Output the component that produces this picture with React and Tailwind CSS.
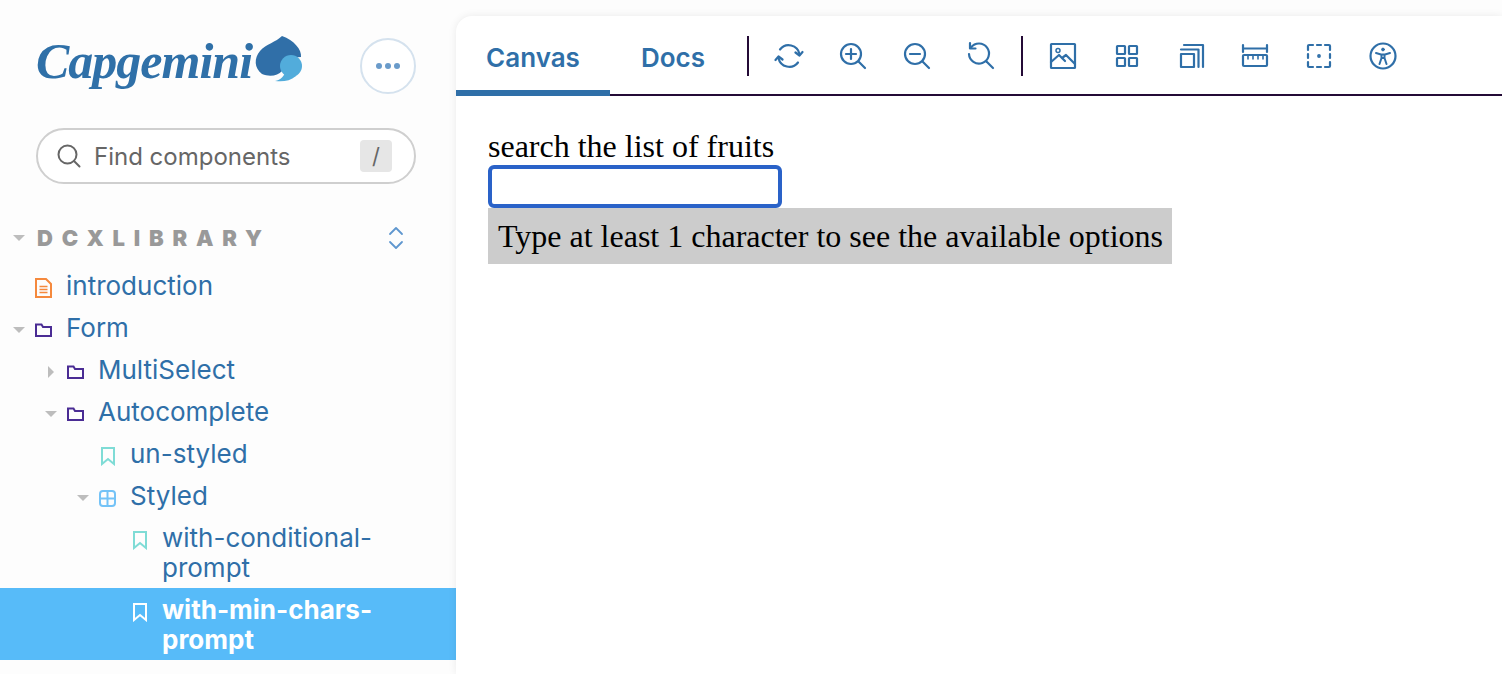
import React from "react";

const Caret = ({ open }) => (
  <svg width="12" height="12" viewBox="0 0 12 12" className="shrink-0">
    {open ? <path d="M0 3h12L6 9z" fill="#bdbdbd" /> : <path d="M3 0l6 6-6 6z" fill="#bdbdbd" />}
  </svg>
);

const DocIcon = () => (
  <svg width="17" height="20" viewBox="0 0 17 20" fill="none" stroke="#f5893d" strokeWidth="2">
    <path d="M1 1h10l5 5v13H1z" />
    <path d="M4.5 8.5h8M4.5 11.5h8M4.5 14.5h8" strokeWidth="1.6" />
  </svg>
);
const FolderIcon = () => (
  <svg width="17" height="14" viewBox="0 0 17 14" fill="none" stroke="#4a2c94" strokeWidth="2">
    <path d="M1 1.5h5.5L8 4h8v9H1z" />
  </svg>
);
const BookmarkIcon = ({ color = "#7fdcd6" }) => (
  <svg width="14" height="19" viewBox="0 0 14 19" fill="none" stroke={color} strokeWidth="2">
    <path d="M1 1h12v16l-6-5-6 5z" />
  </svg>
);
const ComponentIcon = () => (
  <svg width="17" height="17" viewBox="0 0 17 17" fill="none" stroke="#74c3f7" strokeWidth="2">
    <rect x="1" y="1" width="15" height="15" rx="3" />
    <path d="M8.5 1v15M1 8.5h15" />
  </svg>
);

const Row = ({ depth, caret, icon, children, selected }) => (
  <div
    style={{ paddingLeft: 13 + depth * 32 }}
    className={`flex items-start pt-[7px] pb-[5px] ${selected ? "bg-[#57bbf9] text-white font-bold" : "text-[#2f6fa8]"}`}
  >
    <div className="w-[22px] h-[34px] -mb-[4px] flex items-center shrink-0">
      {caret === "open" && <Caret open />}
      {caret === "closed" && <Caret />}
    </div>
    <div className="w-[31px] h-[34px] -mb-[4px] flex items-center shrink-0">{icon}</div>
    <div className="w-[240px] text-[26px] leading-[30px]">{children}</div>
  </div>
);

const Ico = ({ children }) => (
  <div className="w-[64px] flex items-center justify-center">
    <svg width="30" height="30" viewBox="0 0 30 30" fill="none" stroke="#2f6fa8" strokeWidth="2.2" strokeLinecap="round" strokeLinejoin="round">
      {children}
    </svg>
  </div>
);

const Sep = () => <div className="w-[2px] h-[40px] bg-[#240b36] mx-2 shrink-0" />;

export default function App() {
  return (
    <div className="flex w-[1502px] h-[674px] overflow-hidden bg-[#fdfdfd] font-['Inter',sans-serif]">
      <aside className="w-[456px] shrink-0 flex flex-col">
        <div className="flex shrink-0 items-start justify-between pl-[36px] pr-[40px] pt-[38px] h-[128px]">
          <div className="flex items-start">
            <span className="font-['Liberation_Serif',serif] italic font-bold text-[50px] tracking-[-1px] leading-[50px] text-[#2f70a8] w-[218px] -mt-[2px]">Capgemini</span>
            <svg width="50" height="50" viewBox="0 0 50 50" className="-mt-[2px]">
              <path d="M28 0C22 6 12 8 6 15C0 22 0 32 8 38C15 41 24 40 28 35C32 26 38 21 47 21C48 14 40 4 28 0Z" fill="#306fa8" />
              <circle cx="37" cy="30" r="11" fill="#52acdb" />
              <path d="M21 45C27 44 30 40 32 35L42 40C36 45 29 46 21 45Z" fill="#52acdb" />
            </svg>
          </div>
          <div className="w-[56px] h-[56px] rounded-full border-2 border-[#d5e2ee] bg-white flex items-center justify-center gap-[3px]">
            <span className="w-[6px] h-[6px] rounded-full bg-[#6a9bca]" />
            <span className="w-[6px] h-[6px] rounded-full bg-[#6a9bca]" />
            <span className="w-[6px] h-[6px] rounded-full bg-[#6a9bca]" />
          </div>
        </div>

        <div className="ml-[36px] w-[380px] h-[56px] shrink-0 rounded-full border-2 border-[#cfcfcf] bg-white flex items-center pl-[18px] pr-[22px]">
          <svg width="26" height="26" viewBox="0 0 26 26" fill="none" stroke="#666" strokeWidth="2" strokeLinecap="round" className="shrink-0">
            <circle cx="11.5" cy="11.5" r="9" />
            <path d="M18 18l5.5 5.5" />
          </svg>
          <span className="ml-[12px] pt-[2px] flex-1 text-[24px] text-[#666]">Find components</span>
          <span className="w-[32px] h-[32px] rounded bg-[#e6e6e6] flex items-center justify-center text-[22px] text-[#666]">/</span>
        </div>

        <div className="flex shrink-0 items-center pl-[13px] pr-[52px] mt-[40px] h-[28px]">
          <span className="w-[24px] shrink-0 flex"><Caret open /></span>
          <span className="flex-1 text-[22px] font-black tracking-[8.8px] text-[#999]">DCXLIBRARY</span>
          <svg width="16" height="24" viewBox="0 0 16 24" fill="none" stroke="#5f97cf" strokeWidth="1.8" strokeLinecap="round" strokeLinejoin="round">
            <path d="M2 8l6-6 6 6M2 16l6 6 6-6" />
          </svg>
        </div>

        <div className="mt-[12px] flex flex-col">
          <Row depth={0} icon={<DocIcon />}>introduction</Row>
          <Row depth={0} caret="open" icon={<FolderIcon />}>Form</Row>
          <Row depth={1} caret="closed" icon={<FolderIcon />}>MultiSelect</Row>
          <Row depth={1} caret="open" icon={<FolderIcon />}>Autocomplete</Row>
          <Row depth={2} icon={<span className="ml-[2px] flex"><BookmarkIcon /></span>}>un-styled</Row>
          <Row depth={2} caret="open" icon={<ComponentIcon />}>Styled</Row>
          <Row depth={3} icon={<span className="ml-[2px] flex"><BookmarkIcon /></span>}>with-conditional-prompt</Row>
          <Row depth={3} selected icon={<span className="ml-[2px] flex"><BookmarkIcon color="#ffffff" /></span>}>with-min-chars-prompt</Row>
        </div>
      </aside>

      <main className="flex-1 mt-4 bg-white rounded-tl-2xl shadow-[0_0_8px_rgba(0,0,0,0.08)] flex flex-col min-w-0">
        <div className="flex items-center h-[80px] border-b-2 border-[#240b36] pt-[2px]">
          <div className="self-stretch -mb-[2px] w-[154px] pt-[7px] border-b-[6px] border-[#2f6fa8] flex items-center justify-center text-[26px] font-semibold text-[#2f6fa8]">Canvas</div>
          <div className="self-stretch -mb-[2px] w-[126px] pt-[7px] border-b-[6px] border-transparent flex items-center justify-center text-[26px] font-semibold text-[#2f6fa8]">Docs</div>
          <div className="ml-[11px] flex items-center">
            <div className="w-[2px] h-[40px] bg-[#240b36] mr-2 shrink-0" />
            <Ico>
              <path d="M25.5 13A11 11 0 0 0 6 8.5" />
              <path d="M4.5 17A11 11 0 0 0 24 21.5" />
              <path d="M21.5 11.5l4 3 3-3.5" />
              <path d="M8.5 18.5l-4-3-3 3.5" />
            </Ico>
            <Ico>
              <circle cx="13" cy="13" r="10" />
              <path d="M20.5 20.5l6.5 6.5M13 8v10M8 13h10" />
            </Ico>
            <Ico>
              <circle cx="13" cy="13" r="10" />
              <path d="M20.5 20.5l6.5 6.5M8 13h10" />
            </Ico>
            <Ico>
              <path d="M5 6.5A10 10 0 1 1 3 13" />
              <path d="M4 2v5.5h5.5" />
              <path d="M20.5 20.5l6.5 6.5" />
            </Ico>
            <Sep />
            <Ico>
              <rect x="3" y="3" width="24" height="24" rx="0.5" />
              <circle cx="10" cy="9.5" r="2" strokeWidth="1.5" />
              <path d="M3 21l8-7 6 6M14 17l4-3 9 9" />
            </Ico>
            <Ico>
              <rect x="5" y="5" width="8" height="8" rx="0.5" />
              <rect x="17" y="5" width="8" height="8" rx="0.5" />
              <rect x="5" y="17" width="8" height="8" rx="0.5" />
              <rect x="17" y="17" width="8" height="8" rx="0.5" />
            </Ico>
            <Ico>
              <rect x="5" y="13" width="13" height="13" />
              <path d="M5 8.5h17.5V26M8 4h19v22" />
            </Ico>
            <Ico>
              <path d="M3 4v7M27 4v7M3 7.5h24" />
              <rect x="3" y="14" width="24" height="11" rx="1" />
              <path d="M8 14v4M13 14v4M18 14v4M23 14v4" strokeWidth="1.6" />
            </Ico>
            <Ico>
              <path d="M9 4H5a1 1 0 0 0-1 1v4M21 4h4a1 1 0 0 1 1 1v4M9 26H5a1 1 0 0 1-1-1v-4M21 26h4a1 1 0 0 0 1-1v-4M13 4h4M13 26h4M4 13v4M26 13v4" />
              <circle cx="15" cy="15" r="0.8" fill="#2f6fa8" />
            </Ico>
            <Ico>
              <circle cx="15" cy="15" r="12.5" />
              <circle cx="15" cy="8.5" r="1.4" fill="#2f6fa8" strokeWidth="1" />
              <path d="M8 12l5 1.5h4l5-1.5M13.5 13.5V17l-2 6M16.5 13.5V17l2 6M13.5 17h3" strokeWidth="2" />
            </Ico>
          </div>
        </div>

        <div className="pt-[32px] pl-[32px] font-['Liberation_Serif',serif] text-[32px] leading-[37px] text-black">
          <label htmlFor="fruit" className="block">search the list of fruits</label>
          <input id="fruit" className="block w-[294px] h-[43px] bg-white border-4 border-[#2a62c8] rounded-[6px] outline-none" />
          <div className="w-[684px] h-[56px] p-[10px] bg-[#cccccc] whitespace-nowrap leading-[36px]">Type at least 1 character to see the available options</div>
        </div>
      </main>
    </div>
  );
}
